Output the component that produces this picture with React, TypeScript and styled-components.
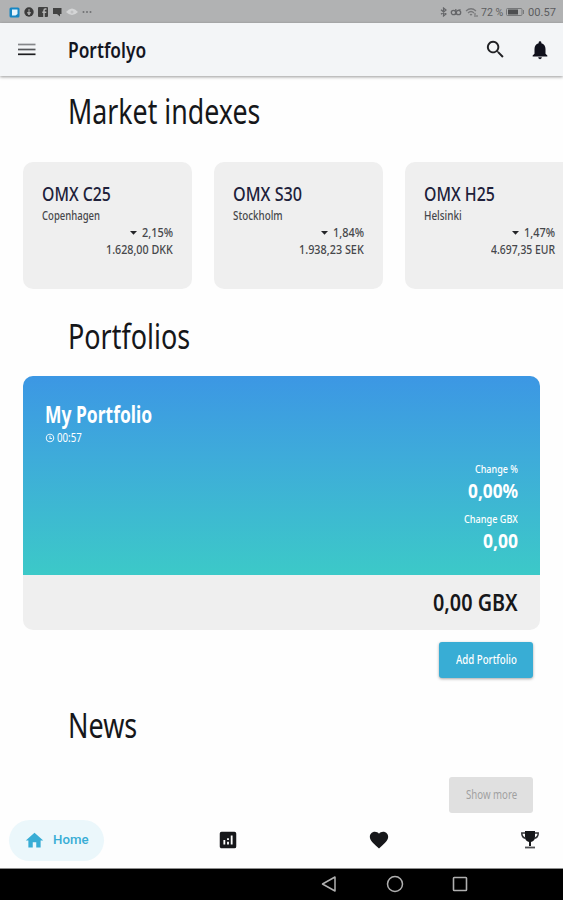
import React, { useLayoutEffect, useRef, useState } from "react";
import styled, { createGlobalStyle } from "styled-components";

const Global = createGlobalStyle`
  * { box-sizing: border-box; }
  body { margin: 0; background: #fff; overflow: hidden; font-family: "Noto Sans", sans-serif; }
`;

/* Condensed text: the label is narrowed to the width of its slot. */
const Slot = styled.span<{ $w: number; $size: number; $line: number; $weight?: number; $color?: string; $font?: string }>`
  display: block;
  flex: none;
  width: ${(p) => p.$w}px;
  height: ${(p) => p.$line}px;
  font-family: ${(p) => p.$font || '"Noto Sans"'}, sans-serif;
  font-size: ${(p) => p.$size}px;
  line-height: ${(p) => p.$line}px;
  font-weight: ${(p) => p.$weight || 400};
  color: ${(p) => p.$color || "inherit"};
  white-space: nowrap;
`;
const Glyphs = styled.span`
  display: inline-block;
  vertical-align: top;
  transform-origin: 0 50%;
`;

type NarrowProps = { w: number; size: number; line: number; weight?: number; color?: string; font?: string; children: string };

function Narrow({ w, size, line, weight, color, font, children }: NarrowProps) {
  const ref = useRef<HTMLSpanElement>(null);
  const [scale, setScale] = useState(1);
  useLayoutEffect(() => {
    if (ref.current && ref.current.offsetWidth) setScale(w / ref.current.offsetWidth);
  }, [w, children]);
  return (
    <Slot $w={w} $size={size} $line={line} $weight={weight} $color={color} $font={font}>
      <Glyphs ref={ref} style={{ transform: `scaleX(${scale})` }}>{children}</Glyphs>
    </Slot>
  );
}

const Screen = styled.div`
  width: 563px;
  height: 900px;
  display: flex;
  flex-direction: column;
  overflow: hidden;
  background: #fefefe;
  color: #16171a;
`;
const StatusBar = styled.div`
  height: 23px;
  flex: none;
  padding: 1px 7px 0 9px;
  background: #b1b2b3;
  display: flex;
  align-items: center;
  justify-content: space-between;
`;
const StatusGroup = styled.div<{ $gap: number }>`
  display: flex;
  align-items: center;
  gap: ${(p) => p.$gap}px;
`;
const Header = styled.header`
  height: 53px;
  flex: none;
  padding: 0 12px 0 18px;
  background: #f3f5f7;
  box-shadow: 0 1px 3px rgba(0, 0, 0, 0.4);
  display: flex;
  align-items: center;
`;
const HeaderTitle = styled.div`
  margin: -2px 0 0 31.5px;
  flex: 1;
`;
const HeaderActions = styled.div`
  display: flex;
  align-items: center;
  gap: 22px;
`;
const Content = styled.main`
  flex: 1;
  min-height: 0;
  display: flex;
  flex-direction: column;
`;
const Heading = styled.h1<{ $top: number }>`
  margin: ${(p) => p.$top}px 0 0 67.5px;
  height: 50px;
  flex: none;
  font-size: 34px;
`;
const IndexList = styled.div`
  margin-top: 26px;
  padding-left: 23px;
  flex: none;
  display: flex;
  gap: 22px;
  overflow: hidden;
`;
const IndexCard = styled.article`
  width: 169px;
  height: 127px;
  flex: none;
  padding: 19px 19px 0 18.5px;
  border-radius: 10px;
  background: #efefef;
  color: #46474b;
  display: flex;
  flex-direction: column;
  gap: 1px;
`;
const RightRow = styled.div`
  display: flex;
  justify-content: flex-end;
  align-items: center;
  gap: 5px;
`;
const PortfolioCard = styled.article`
  margin: 15px 23px 0;
  height: 254px;
  flex: none;
  border-radius: 10px;
  overflow: hidden;
  background: #efefef;
`;
const PortfolioBody = styled.div`
  height: 199px;
  padding: 22px 22px 0;
  background: linear-gradient(180deg, #3c97e4 0%, #3eabda 40%, #3cc9c8 100%);
  color: #fff;
  display: flex;
  flex-direction: column;
`;
const TimeRow = styled.div`
  display: flex;
  align-items: center;
  gap: 2px;
`;
const Stats = styled.div`
  margin-top: 15px;
  display: flex;
  flex-direction: column;
  align-items: flex-end;
`;
const StatGap = styled.div<{ $h: number }>`
  height: ${(p) => p.$h}px;
`;
const PortfolioTotal = styled.div`
  height: 55px;
  padding: 11px 22px 0;
  display: flex;
  justify-content: flex-end;
`;
const ButtonRow = styled.div<{ $top: number }>`
  margin-top: ${(p) => p.$top}px;
  padding-right: 30px;
  flex: none;
  display: flex;
  justify-content: flex-end;
`;
const Button = styled.button<{ $w: number; $muted?: boolean }>`
  width: ${(p) => p.$w}px;
  height: 36px;
  padding: 0;
  border: 0;
  border-radius: 3px;
  background: ${(p) => (p.$muted ? "#e0e0e0" : "#38add5")};
  color: ${(p) => (p.$muted ? "#a0a0a0" : "#fff")};
  box-shadow: ${(p) => (p.$muted ? "none" : "0 1px 3px rgba(0,0,0,.35)")};
  display: flex;
  align-items: center;
  justify-content: center;
`;
const TabBar = styled.nav`
  height: 56px;
  flex: none;
  padding: 0 22px 0 9px;
  display: flex;
  align-items: center;
`;
const HomeTab = styled.div`
  width: 95px;
  height: 41px;
  padding-left: 15px;
  border-radius: 21px;
  background: #ebf7fb;
  color: #38add5;
  display: flex;
  align-items: center;
  gap: 8px;
`;
const TabIcon = styled.div<{ $left: number }>`
  margin-left: ${(p) => p.$left}px;
  width: 22px;
  height: 22px;
  display: flex;
`;
const SystemBar = styled.footer`
  height: 32px;
  flex: none;
  padding: 0 95px 1px 320px;
  border-top: 1px solid #8d8d8d;
  background: #000;
  display: flex;
  align-items: center;
  justify-content: space-between;
`;

const Icon = ({ d, size = 22, fill = "currentColor" }: { d: string; size?: number; fill?: string }) => (
  <svg width={size} height={size} viewBox="0 0 24 24" fill={fill}><path d={d} fillRule="evenodd" /></svg>
);

const indexes = [
  { name: "OMX C25", nameW: 69, city: "Copenhagen", cityW: 58, change: "2,15%", value: "1.628,00 DKK", valueW: 67 },
  { name: "OMX S30", nameW: 69, city: "Stockholm", cityW: 50, change: "1,84%", value: "1.938,23 SEK", valueW: 65 },
  { name: "OMX H25", nameW: 71, city: "Helsinki", cityW: 38, change: "1,47%", value: "4.697,35 EUR", valueW: 64 },
];

export default function App() {
  return (
    <Screen>
      <Global />
      <StatusBar>
        <StatusGroup $gap={4}>
          <svg width="11" height="11" viewBox="0 0 11 11"><rect x=".5" y=".5" width="10" height="10" rx="1.5" fill="#1686c4" /><path d="M3 2.500h5.500v4.500l-2 1.500H3z" fill="#e8f5fc" /></svg>
          <svg width="10" height="10" viewBox="0 0 10 10"><circle cx="5" cy="5" r="4.700" fill="#3b3b3b" /><path d="M5 2v3.500M3.500 5.500h3L5 8z" stroke="#aaa" fill="#aaa" strokeWidth="1" /></svg>
          <svg width="10" height="10" viewBox="0 0 10 10"><rect width="10" height="10" rx="1" fill="#424242" /><path d="M8.500 2H7.300Q6 2 6 3.500V10M4.300 5.300h4" stroke="#b5b5b5" strokeWidth="1.500" fill="none" /></svg>
          <svg width="10" height="10" viewBox="0 0 10 10"><path d="M1 1h8.500v6H8v2.500L5 7H1z" fill="#424242" /></svg>
          <svg width="12" height="10" viewBox="0 0 12 10"><path d="M0 5q6-7 12 0Q6 11 0 5z" fill="#d4d5d6" /><circle cx="6" cy="5" r="1.500" fill="#bfc0c1" /></svg>
          <svg width="10" height="4" viewBox="0 0 10 4" fill="#707173"><circle cx="1.500" cy="2" r="1" /><circle cx="5" cy="2" r="1" /><circle cx="8.500" cy="2" r="1" /></svg>
        </StatusGroup>
        <StatusGroup $gap={3}>
          <svg width="7" height="10" viewBox="0 0 7 10" fill="none" stroke="#66676a" strokeWidth="1.200"><path d="M1 2.800 6 7 3.500 9V1L6 3 1 7.200" /></svg>
          <svg width="12" height="10" viewBox="0 0 12 10" fill="none" stroke="#66676a" strokeWidth="1.300"><circle cx="3.500" cy="5.500" r="2.200" /><circle cx="8.500" cy="5.500" r="2.200" /><path d="M5.800 2v6M10.500 2.500 8 3.500" /></svg>
          <svg width="13" height="11" viewBox="0 0 13 11" fill="none" stroke="#77787a" strokeWidth="1.200"><path d="M1 4q5-4.500 10 0M3 6q3-3 6 0M5 8q1-1 2 0M10 6v4M12 8v2" /></svg>
          <Narrow w={22} size={11.5} line={14} color="#5c5d60" font="Roboto">72 %</Narrow>
          <svg width="19" height="8" viewBox="0 0 19 8"><rect x=".5" y=".5" width="15.500" height="7" rx="1" fill="none" stroke="#77787a" /><rect x="2" y="1.500" width="10" height="5" fill="#4d4e50" /><path d="M17.500 2v4" stroke="#77787a" /></svg>
          <Narrow w={28} size={11.5} line={14} color="#5c5d60" font="Roboto">00.57</Narrow>
        </StatusGroup>
      </StatusBar>
      <Header>
        <svg width="18" height="14" viewBox="0 0 18 14" strokeWidth="1.700"><path d="M0 1.500h17.500" stroke="#85878a" /><path d="M0 6.500h17.500" stroke="#55575a" /><path d="M0 11.300h17.500" stroke="#1c1d20" /></svg>
        <HeaderTitle><Narrow w={78} size={22} line={30} weight={600} color="#14151f">Portfolyo</Narrow></HeaderTitle>
        <HeaderActions>
          <Icon size={23} fill="#202124" d="M15.500 14h-.79l-.28-.27A6.500 6.500 0 1 0 13.730 14.430l.27.28v.79l5 5L20.490 19zM9.500 14a4.500 4.500 0 1 1 0-9 4.500 4.500 0 0 1 0 9z" />
          <Icon fill="#10111c" d="M12 22c1.100 0 2-.9 2-2h-4a2 2 0 0 0 2 2zm6-6v-5c0-3.070-1.640-5.640-4.500-6.320V4a1.500 1.500 0 0 0-3 0v.68C7.630 5.360 6 7.920 6 11v5l-2 2v1h16v-1z" />
        </HeaderActions>
      </Header>
      <Content>
        <Heading $top={10}><Narrow w={192} size={34} line={50}>Market indexes</Narrow></Heading>
        <IndexList>
          {indexes.map((i) => (
            <IndexCard key={i.name}>
              <Narrow w={i.nameW} size={19} line={26} weight={500} color="#20213a">{i.name}</Narrow>
              <Narrow w={i.cityW} size={12} line={16} weight={500}>{i.city}</Narrow>
              <RightRow>
                <svg width="7" height="4" viewBox="0 0 7 4"><path d="M0 0h7L3.500 3.800z" fill="#242528" /></svg>
                <Narrow w={31} size={12} line={16} weight={500}>{i.change}</Narrow>
              </RightRow>
              <RightRow><Narrow w={i.valueW} size={12} line={16} weight={500}>{i.value}</Narrow></RightRow>
            </IndexCard>
          ))}
        </IndexList>
        <Heading $top={22}><Narrow w={122} size={34} line={50}>Portfolios</Narrow></Heading>
        <PortfolioCard>
          <PortfolioBody>
            <Narrow w={107} size={24} line={32} weight={700}>My Portfolio</Narrow>
            <TimeRow>
              <svg width="10" height="10" viewBox="0 0 10 10" fill="none" stroke="#e3f2fb" strokeWidth="1.100"><circle cx="5" cy="5" r="3.700" /><path d="M5 2.800V5.500h2" /></svg>
              <Narrow w={25} size={12} line={16}>00:57</Narrow>
            </TimeRow>
            <Stats>
              <Narrow w={43} size={11.5} line={16} weight={500}>Change %</Narrow>
              <StatGap $h={1} />
              <Narrow w={50} size={19} line={26} weight={700}>0,00%</Narrow>
              <StatGap $h={7} />
              <Narrow w={54} size={11.5} line={16} weight={500}>Change GBX</Narrow>
              <StatGap $h={1} />
              <Narrow w={35} size={19} line={26} weight={700}>0,00</Narrow>
            </Stats>
          </PortfolioBody>
          <PortfolioTotal><Narrow w={85} size={24} line={32} weight={600}>0,00 GBX</Narrow></PortfolioTotal>
        </PortfolioCard>
        <ButtonRow $top={12}><Button $w={94}><Narrow w={61} size={12.5} line={18} weight={500}>Add Portfolio</Narrow></Button></ButtonRow>
        <Heading $top={22}><Narrow w={69} size={34} line={50}>News</Narrow></Heading>
        <ButtonRow $top={27}><Button $w={84} $muted><Narrow w={51} size={12.5} line={18}>Show more</Narrow></Button></ButtonRow>
      </Content>
      <TabBar>
        <HomeTab>
          <Icon d="M10 20v-6h4v6h5v-8h3L12 3 2 12h3v8z" size={21} />
          <Narrow w={36} size={12.5} line={18} weight={500} font="Roboto">Home</Narrow>
        </HomeTab>
        <TabIcon $left={113}><Icon d="M19 3H5a2 2 0 0 0-2 2v14c0 1.100.9 2 2 2h14a2 2 0 0 0 2-2V5a2 2 0 0 0-2-2zM9 17H7v-5h2zm4 0h-2v-3h2zm0-5h-2v-2h2zm4 5h-2V7h2z" /></TabIcon>
        <TabIcon $left={129}><Icon d="m12 21.350-1.450-1.320C5.400 15.360 2 12.280 2 8.500 2 5.420 4.420 3 7.500 3c1.740 0 3.410.81 4.500 2.090C13.090 3.810 14.760 3 16.500 3 19.580 3 22 5.420 22 8.500c0 3.780-3.400 6.860-8.550 11.540z" /></TabIcon>
        <TabIcon $left={129}>
          <svg width="22" height="22" viewBox="0 0 22 22" fill="none"><path d="M6 2h10v6q0 4-4 5v4h-2v-4q-4-1-4-5z" fill="#16171a" /><path d="M6 4H2.800q-.2 4.500 4.200 5.500M16 4h3.200q.2 4.500-4.200 5.500" stroke="#303134" strokeWidth="1.500" /><path d="M6 18.500h10" stroke="#505154" strokeWidth="1.800" /></svg>
        </TabIcon>
      </TabBar>
      <SystemBar>
        <svg width="18" height="18" viewBox="0 0 18 18" fill="none" stroke="#b0b0b0" strokeWidth="1.500"><path d="M15 2v14L2.500 9z" strokeLinejoin="round" /></svg>
        <svg width="18" height="18" viewBox="0 0 18 18" fill="none" stroke="#b0b0b0" strokeWidth="1.500"><circle cx="9" cy="9" r="7.500" /></svg>
        <svg width="16" height="16" viewBox="0 0 16 16" fill="none" stroke="#b0b0b0" strokeWidth="1.600"><rect x="1.500" y="1.500" width="13" height="13" rx=".7" /></svg>
      </SystemBar>
    </Screen>
  );
}
